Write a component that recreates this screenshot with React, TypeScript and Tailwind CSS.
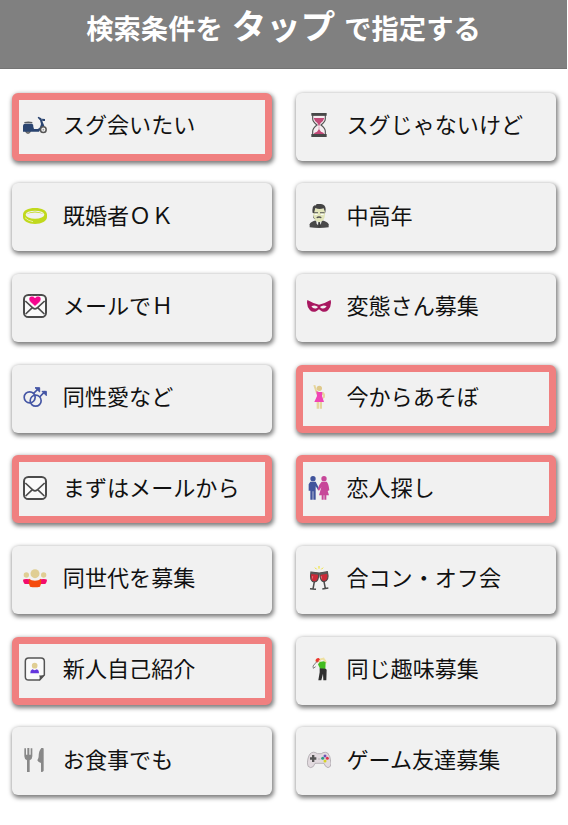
import type { ReactNode } from "react";

type Item = {
  label: string;
  icon: ReactNode;
  selected?: boolean;
};

/* Iconos, todos sobre una caja de 72x72 */

const scooter = (
  <>
    <circle cx="15" cy="54" r="7" fill="#888" stroke="#555" strokeWidth="3" />
    <path d="M0 49V38q1-6 6-6h21q5 1 4 9l2 7h11q6 0 8-8l2-7-3-11-7-8 2-3 9 5 5 13 4 9-8 6-8 12H0z" fill="#2a4470" />
    <path d="M4 27q12-3 24 0v4H4z" fill="#5a5e63" />
    <path d="M57 17l9 1v6h-8z" fill="#2a4470" />
    <circle cx="61" cy="50" r="8.5" fill="#f1f1f1" stroke="#555" strokeWidth="4.5" />
    <circle cx="61" cy="50" r="2.5" fill="#999" />
  </>
);

const hourglass = (
  <>
    <path d="M17 6h38v11q0 9-13 19 13 10 13 19v10H17V55q0-9 13-19Q17 26 17 17z" fill="#f5edf0" stroke="#555" strokeWidth="3.5" />
    <path d="M20 15h32q-2 9-11 15l-4 7h-2l-4-7q-9-6-11-15zM20 64q1-6 10-8l6-8 6 8q9 2 10 8z" fill="#c24a78" />
    <path d="M36 36v13" stroke="#c24a78" strokeWidth="2" strokeDasharray="3 2" />
    <path d="M13 0h46v8H13zM13 63h46v9H13z" fill="#484848" />
  </>
);

const ring = (
  <>
    <path d="M36 12C14 12-1 20 0 34v5c0 12 16 21 36 21s36-9 36-21v-5c1-14-14-22-36-22z" fill="#c1d91d" />
    <ellipse cx="36" cy="32" rx="28" ry="12" fill="#f1f1f1" />
    <path d="M9 30q27-15 54 0-27-9-54 0z" fill="#c1d91d" />
    <path d="M6 41q8 9 24 12" fill="none" stroke="#eff5b5" strokeWidth="2.5" />
  </>
);

const mail = (
  <>
    <rect x="3" y="3" width="66" height="66" rx="13" fill="#fafafa" stroke="#4b4b4b" strokeWidth="6" />
    <path d="M7 21l23 21q6 5 12 0l23-21M8 60l20-19M64 60L44 41" fill="none" stroke="#4b4b4b" strokeWidth="5" />
  </>
);

const loveMail = (
  <>
    {mail}
    <path d="M36 37L21 23C14 13 21 5 29 7q5 1 7 5 2-4 7-5c8-2 15 6 8 16z" fill="#f5058e" stroke="#fff" strokeWidth="1.5" />
  </>
);

const gentleman = (
  <>
    <path d="M8 70V61q2-8 20-12h16q18 4 21 12v9q-29 4-57 0z" fill="#494949" />
    <path d="M27 47h18l-3 12-6 8-7-8z" fill="#eef0ef" />
    <path d="M34 54h5l2 14h-8z" fill="#3c3c3c" />
    <path d="M19 15q17-6 35 0v17q-1 15-10 20-8 5-15 0-9-5-10-20z" fill="#e2e5ba" />
    <path d="M17 27q-3-18 5-23 4 2 7-4 26-3 27 15l-1 12-5-14q-14 4-25-1l-4 15zM19 32l2 9 5 5-7-4z" fill="#444" />
    <path d="M20 25h13v3H20zM39 25h14v3H39zM28 40q8-7 16 0l-2 3q-6-4-12 0z" fill="#505050" />
    <path d="M23 29h9v4h-9zM41 29h9v4h-9z" fill="#fafbf4" />
  </>
);

const mask = (
  <path
    fill="#a81760"
    fillRule="evenodd"
    d="M1 18q17 10 35 14 18-4 35-14 4 17-8 31-9 8-20 2l-7-5-7 5q-11 6-20-2Q-3 35 1 18zm12 19q7 10 17 5l3-3q-9-8-20-2zm46 0q-11-6-20 2l3 3q10 5 17-5z"
  />
);

const sameSex = (
  <g fill="none" stroke="#4556a5" strokeWidth="5">
    <circle cx="20" cy="37" r="16.5" />
    <circle cx="38" cy="47" r="16.5" />
    <path d="M31 26L45 12M50 36l16-17" />
    <path d="M36 8h14v13zM57 19h13v13z" fill="#4556a5" strokeWidth="3" />
  </g>
);

const girl = (
  <>
    <path d="M19 1l6-1 5 17 8 5v6H28zM48 20q9 6 5 18l-7 5 2-10-5-8zM29 49h7v22h-7zM38 49h7v22h-7z" fill="#e6d59c" />
    <circle cx="37" cy="10" r="8" fill="#dfc98a" />
    <path d="M28 18l6 3h12l-1 12 6 18H22l8-18z" fill="#f044b5" />
  </>
);

const couple = (
  <>
    <circle cx="18" cy="8" r="8" fill="#41549c" />
    <path d="M10 17h16l10 20-3 4-7-10v40h-7V46h-2v25h-7V44H5V25z" fill="#41549c" />
    <circle cx="51" cy="8" r="8" fill="#c74799" />
    <path d="M44 17h15q6 5 8 26l-5 2-3-10 7 23h-8v13h-6V58h-2v13h-6V58h-8l7-24-7 10-4-3q3-16 12-24z" fill="#c74799" />
  </>
);

const group = (
  <>
    <circle cx="10" cy="27" r="8" fill="#e0ce93" />
    <circle cx="62" cy="27" r="8" fill="#e0ce93" />
    <path d="M0 41q5-3 20-1v14H5q-5-5-5-13zM72 41q-5-3-20-1v14h15q5-5 5-13z" fill="#f30c6c" />
    <circle cx="36" cy="23" r="13.5" fill="#e0ce93" />
    <path d="M18 38q7 6 18 6t18-6q3 14-3 24-15 3-30 0-6-10-3-24z" fill="#f54a0b" />
  </>
);

const profile = (
  <>
    <path d="M17 3h37q10 0 10 10v41L50 69H17Q7 69 7 59V13Q7 3 17 3z" fill="#fafafa" stroke="#555" strokeWidth="4.5" />
    <path d="M65 53L49 71q2-10 0-16 8 1 16-2z" fill="#505050" />
    <circle cx="35" cy="26" r="8.5" fill="#e0ce93" />
    <path d="M22 49q-1-9 6-12 7 5 14 0 7 3 6 12z" fill="#6334dd" />
  </>
);

const wine = (
  <>
    <path d="M24 5l5 5M36 0v8M48 5l-5 5" stroke="#efe21f" strokeWidth="3" />
    <g fill="#cb2938" stroke="#4b4b4b" strokeWidth="3.5">
      <path d="M12 18l23 3q1 26-12 27-17-1-11-30z" />
      <path d="M38 21l23-4q7 27-10 30-12 0-13-26z" />
    </g>
    <path d="M12 18l23 3-1 5-23-2zM38 21l23-4 1 6-23 4z" fill="#585858" />
    <path d="M22 47l-4 22M9 68l18 2M51 47l4 20M46 69l18-3" stroke="#4b4b4b" strokeWidth="4.5" fill="none" />
    <path d="M17 30l-1 8M43 30l1 8" stroke="#ed8a90" strokeWidth="2" />
  </>
);

const golf = (
  <>
    <path d="M47 5q9 4 9 14" fill="none" stroke="#eee0a0" strokeWidth="6" />
    <path d="M24 11l13-3 15-4" fill="none" stroke="#eee0a0" strokeWidth="5" />
    <circle cx="36" cy="11" r="5" fill="#efdba0" />
    <path d="M26 13q0-10 9-10l4 4-4 4-1 4-5 2z" fill="#ec342f" />
    <path d="M38 15l12-2 6 3-1 21-16-2-6-13z" fill="#43bd21" />
    <path d="M38 34l18 1 3 3-1 32h-9l-1-20-5 20h-9l4-24z" fill="#303030" />
    <path d="M30 13L18 27l1 7 7-5" fill="none" stroke="#808080" strokeWidth="3" />
  </>
);

const cutlery = (
  <path
    fill="#888"
    d="M4 1h5v19h4V0h6v20h4V1h5v24q0 9-8 12v35h-8V37q-8-3-8-12zM55 0q6-1 7 2v66q-1 4-8 4V45q-8-1-11-8 4-5 4-12 0-16 8-25z"
  />
);

const gamepad = (
  <>
    <path d="M14 14q6-3 12 0l5 3h12l5-3q7-3 14 1 8 7 10 31 0 12-9 13-9-2-12-13H24Q20 59 11 59 1 58 1 45 3 19 14 14z" fill="#e2dadf" stroke="#a09aa0" strokeWidth="2" />
    <path d="M15 21h7v7h6v7h-6v7h-7v-7H9v-7h6z" fill="#555" />
    <circle cx="54" cy="24" r="4.5" fill="#7150b5" />
    <circle cx="47" cy="31" r="4.5" fill="#2b9b83" />
    <circle cx="61" cy="31" r="4.5" fill="#de334d" />
    <circle cx="54" cy="39" r="4.5" fill="#d6d326" />
    <path d="M33 33h7" stroke="#aaa3aa" strokeWidth="2" />
  </>
);

const items: Item[] = [
  { label: "スグ会いたい", icon: scooter, selected: true },
  { label: "スグじゃないけど", icon: hourglass },
  { label: "既婚者ＯＫ", icon: ring },
  { label: "中高年", icon: gentleman },
  { label: "メールでＨ", icon: loveMail },
  { label: "変態さん募集", icon: mask },
  { label: "同性愛など", icon: sameSex },
  { label: "今からあそぼ", icon: girl, selected: true },
  { label: "まずはメールから", icon: mail, selected: true },
  { label: "恋人探し", icon: couple, selected: true },
  { label: "同世代を募集", icon: group },
  { label: "合コン・オフ会", icon: wine },
  { label: "新人自己紹介", icon: profile, selected: true },
  { label: "同じ趣味募集", icon: golf },
  { label: "お食事でも", icon: cutlery },
  { label: "ゲーム友達募集", icon: gamepad },
];

function ConditionButton({ label, icon, selected }: Item) {
  return (
    <button
      className={`flex h-[68px] items-center rounded-[6px] bg-[#f1f1f1] pb-[3px] text-left shadow-[1px_2px_4px_1px_rgba(0,0,0,0.5)] ${
        selected ? "border-[7px] border-[#f08080] pl-[4.3px]" : "pl-[11.3px]"
      }`}
    >
      <svg viewBox="0 0 72 72" className="size-6 shrink-0">
        {icon}
      </svg>
      <span className="ml-[15.5px] whitespace-nowrap pb-[4px] text-[22.1px] leading-8 text-[#111]">{label}</span>
    </button>
  );
}

export default function App() {
  return (
    <div className="h-[825px] w-[568px] overflow-hidden bg-white font-['Noto_Sans_CJK_JP',sans-serif]">
      {/* Cabecera */}
      <header className="h-[69px] w-[567px] border-b border-[#747474] bg-[#808080] font-bold text-white">
        <h1 className="flex items-baseline justify-center whitespace-nowrap text-[27.3px] leading-[48px]">
          <span>検索条件を</span>
          <span className="mx-[9px] text-[34.5px]">タップ</span>
          <span>で指定する</span>
        </h1>
      </header>

      {/* Condiciones de búsqueda */}
      <main className="grid grid-cols-[260px_260px] gap-x-[23.6px] gap-y-[22.7px] pl-[12px] pt-[23.5px]">
        {items.map((item) => (
          <ConditionButton key={item.label} {...item} />
        ))}
      </main>
    </div>
  );
}
